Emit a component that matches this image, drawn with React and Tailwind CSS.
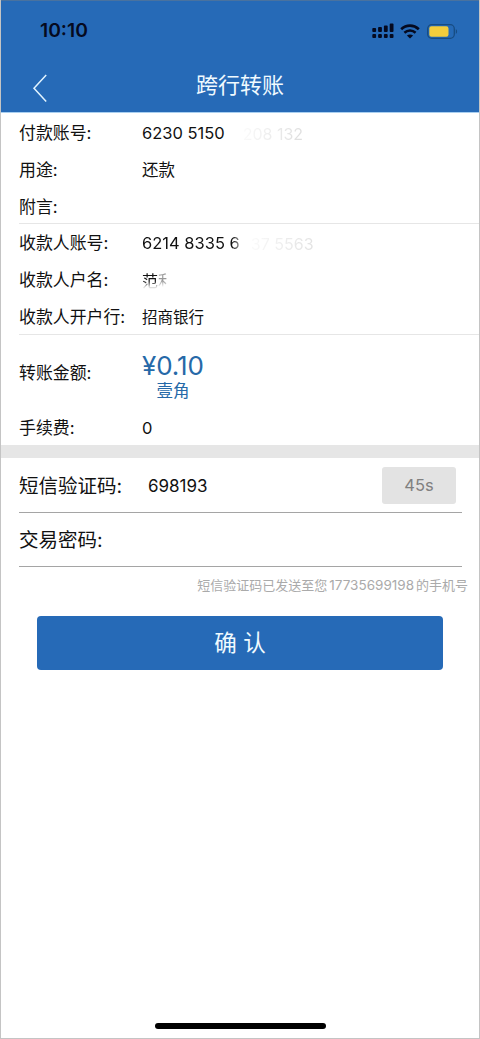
const HEADER_SIGNAL = [4, 5, 6.5, 8.5];

function SignalIcon() {
    return (
        <svg width="22" height="16" viewBox="0 0 22 16" fill="#050a1f">
            {HEADER_SIGNAL.map((h, i) => (
                <g key={i}>
                    <rect x={0.3 + i * 5.8} y={9 - h} width="3.8" height={h} rx="0.9" />
                    <rect x={0.3 + i * 5.8} y="11" width="3.8" height="4" rx="1" />
                </g>
            ))}
        </svg>
    );
}

function WifiIcon() {
    return (
        <svg width="20" height="15" viewBox="0 0 20 15" fill="none" stroke="#050a1f">
            <path d="M1.2 5.2C6.2.5 13.8.5 18.8 5.2" strokeWidth="2.7" />
            <path d="M4.4 8.7C7.6 5.8 12.4 5.8 15.6 8.7" strokeWidth="2.5" />
            <path d="M10 14.4 6.9 11.5C8.7 10 11.3 10 13.1 11.5Z" fill="#050a1f" stroke="none" />
        </svg>
    );
}

function BatteryIcon() {
    return (
        <svg width="31" height="15" viewBox="0 0 31 15">
            <rect x="0.7" y="0.7" width="26.6" height="13.6" rx="4" fill="none" stroke="#174c82" strokeWidth="1.3" />
            <rect x="2.3" y="2.2" width="19.2" height="10.6" rx="2.2" fill="#f2cd3c" />
            <path d="M28.8 5.2c1.7.5 1.7 4.1 0 4.6z" fill="#174c82" />
        </svg>
    );
}

function Row({ label, children }) {
    return (
        <div className="flex h-[37px] items-center">
            <span className="w-[123px] shrink-0 whitespace-nowrap text-[16.9px]">{label}:</span>
            {children}
        </div>
    );
}

export default function App() {
    return (
        <div className="flex h-[1039px] w-[480px] flex-col overflow-hidden border-x border-b border-[#c4c4c4] bg-white font-['Inter','Noto_Sans_CJK_SC',sans-serif] leading-none text-[#111]">
            {/* Status bar + title */}
            <header className="-mx-px h-[113px] shrink-0 border-b border-[#a9cff0] border-t border-t-[#49729f] bg-[#266ab7]">
                <div className="flex h-[60px] items-center justify-between pl-10 pr-[22px]">
                    <span className="text-[19.3px] font-semibold text-[#050a1f]">10:10</span>
                    <div className="flex items-center">
                        <SignalIcon />
                        <span className="ml-[6px]"><WifiIcon /></span>
                        <span className="ml-[7px]"><BatteryIcon /></span>
                    </div>
                </div>
                <div className="grid h-[50px] grid-cols-3 items-center text-[#f0faff]">
                    <svg className="ml-8 mt-1" width="16" height="30" viewBox="0 0 16 30" fill="none" stroke="#e2f4ff" strokeWidth="1.5">
                        <path d="M14.2 2 2 15.2 14.2 28.5" />
                    </svg>
                    <h1 className="pb-[2px] text-center text-[22px]">跨行转账</h1>
                </div>
            </header>

            <section className="ml-[18px] h-[111px] shrink-0 border-b border-[#e6e6e6] pt-[2px]">
                <Row label="付款账号">
                    <span className="whitespace-pre text-[16.5px]">6230 5150</span>
                    <span className="ml-[18px] bg-linear-to-r from-[#fafafa] to-[#dedede] bg-clip-text text-[16px] text-transparent">208 132</span>
                </Row>
                <Row label="用途"><span className="text-[16.5px]">还款</span></Row>
                <Row label="附言" />
            </section>

            <section className="ml-[18px] h-[111px] shrink-0 border-b border-[#e6e6e6] pt-px">
                <Row label="收款人账号">
                    <span className="bg-linear-to-r from-[#111] from-92% to-[#aaa] bg-clip-text text-[16.5px] text-transparent">6214 8335 6</span>
                    <span className="ml-[11px] bg-linear-to-r from-[#fafafa] to-[#e2e2e2] bg-clip-text text-[16px] text-transparent">37 5563</span>
                </Row>
                <Row label="收款人户名">
                    <span className="bg-linear-to-b from-[#111] from-50% to-[#ddd] to-80% bg-clip-text text-[16px] leading-5 text-transparent">范</span>
                    <span className="bg-linear-to-b from-[#999] from-50% to-white to-80% bg-[length:9px_100%] bg-clip-text bg-no-repeat text-[16px] leading-5 text-transparent">利</span>
                </Row>
                <Row label="收款人开户行"><span className="text-[15.5px]">招商银行</span></Row>
            </section>

            <section className="ml-[18px] h-[110px] shrink-0 pt-px">
                <div className="flex h-[74px] items-center">
                    <span className="w-[123px] shrink-0 text-[16.9px]">转账金额:</span>
                    <div className="flex flex-col items-center pt-[8px] text-[#2669a8]">
                        <span className="text-[26px] leading-[28px] tracking-[-0.1px]">¥0.10</span>
                        <span className="text-[16.5px] leading-[22px]">壹角</span>
                    </div>
                </div>
                <Row label="手续费"><span className="text-[16.5px]">0</span></Row>
            </section>

            <div className="-mx-px h-[13px] shrink-0 bg-[#e6e6e6]" />

            {/* Verification */}
            <section className="ml-[18px] mr-[17px] shrink-0">
                <div className="flex h-[55px] items-center border-b border-[#a5a5a5]">
                    <span className="w-[129px] shrink-0 pt-[3px] text-[19.5px]">短信验证码:</span>
                    <span className="pt-[2px] text-[17px]">698193</span>
                    <button type="button" className="ml-auto mr-[6px] h-[37px] w-[74px] rounded-[3px] bg-[#e3e3e3] text-[16.5px] text-[#808080]">45s</button>
                </div>
                <div className="flex h-[54px] items-center border-b border-[#a5a5a5]">
                    <span className="pt-[3px] text-[19.5px]">交易密码:</span>
                </div>
            </section>

            <p className="mr-[11px] flex h-[37px] shrink-0 items-center justify-end whitespace-nowrap text-[13px] text-[#aaa]">
                短信验证码已发送至您<span className="mx-[2px] text-[13.5px]">17735699198</span>的手机号
            </p>

            <button type="button" className="mx-9 mt-3 h-[54px] shrink-0 rounded-[4px] bg-[#266ab7] text-[22.5px] text-[#f0faff]">
                确 认
            </button>

            <div className="mx-auto mb-[9px] mt-auto h-[6px] w-[171px] shrink-0 rounded-full bg-black" />
        </div>
    );
}
